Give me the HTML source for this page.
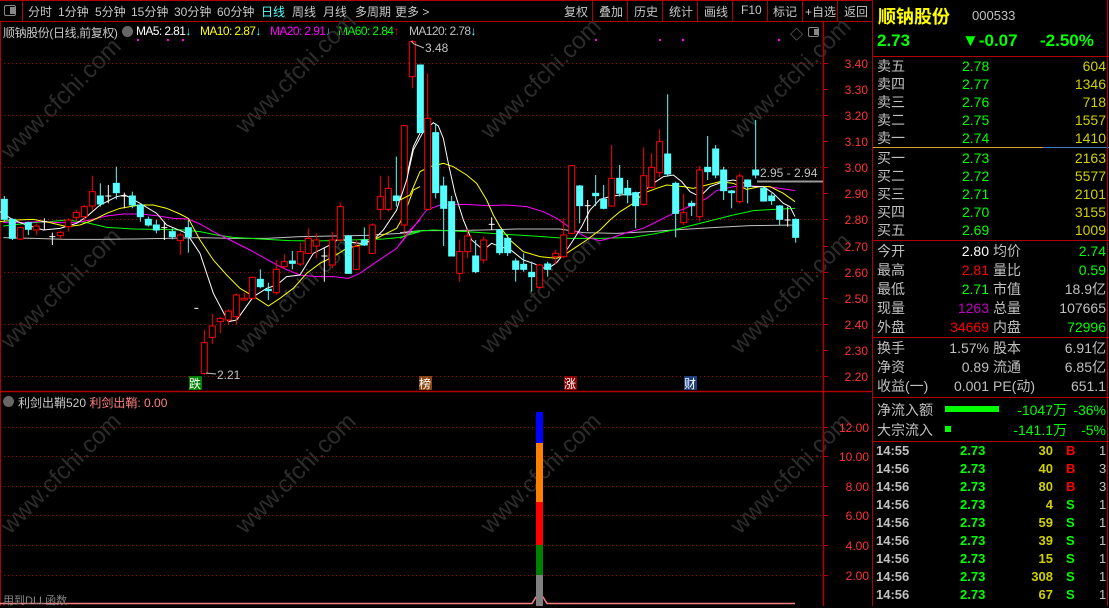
<!DOCTYPE html>
<html><head><meta charset="utf-8"><style>
*{margin:0;padding:0;box-sizing:border-box}
body{width:1109px;height:606px;background:#000;overflow:hidden;position:relative;font-family:"Liberation Sans","Noto Sans CJK SC",sans-serif;color:#c0c0c0}
.a{position:absolute;white-space:nowrap}
.tb{font-size:12px;color:#c8c8c8;top:3px}
.rp{font-size:14px}
.r{text-align:right}
.ma{font-size:12px;letter-spacing:-0.6px;top:24px}
</style></head><body>
<!-- top toolbar -->
<div class="a" style="left:0;top:0;width:873px;height:22px;border:1px solid #b00000;border-left:0"></div>
<div class="a" style="left:22px;top:1px;width:1px;height:20px;background:#b00000"></div>
<div class="a" style="left:4px;top:5px;width:12px;height:11px;border:1px solid #888;border-radius:2px"></div>
<div class="a" style="left:10px;top:7px;width:5px;height:7px;background:#888"></div>
<div class="a tb" style="left:28px">分时</div>
<div class="a tb" style="left:58px">1分钟</div>
<div class="a tb" style="left:95px">5分钟</div>
<div class="a tb" style="left:131px">15分钟</div>
<div class="a tb" style="left:174px">30分钟</div>
<div class="a tb" style="left:217px">60分钟</div>
<div class="a tb" style="left:261px;color:#55ffff">日线</div>
<div class="a tb" style="left:292px">周线</div>
<div class="a tb" style="left:323px">月线</div>
<div class="a tb" style="left:355px">多周期</div>
<div class="a tb" style="left:395px">更多 &gt;</div>
<div class="a tb" style="left:564px">复权</div>
<div class="a tb" style="left:599px">叠加</div>
<div class="a tb" style="left:634px">历史</div>
<div class="a tb" style="left:669px">统计</div>
<div class="a tb" style="left:704px">画线</div>
<div class="a tb" style="left:741px">F10</div>
<div class="a tb" style="left:773px">标记</div>
<div class="a tb" style="left:805px">+自选</div>
<div class="a tb" style="left:844px">返回</div>
<div class="a" style="left:592px;top:1px;width:1px;height:20px;background:#b00000"></div>
<div class="a" style="left:627px;top:1px;width:1px;height:20px;background:#b00000"></div>
<div class="a" style="left:662px;top:1px;width:1px;height:20px;background:#b00000"></div>
<div class="a" style="left:697px;top:1px;width:1px;height:20px;background:#b00000"></div>
<div class="a" style="left:732px;top:1px;width:1px;height:20px;background:#b00000"></div>
<div class="a" style="left:767px;top:1px;width:1px;height:20px;background:#b00000"></div>
<div class="a" style="left:802px;top:1px;width:1px;height:20px;background:#b00000"></div>
<div class="a" style="left:837px;top:1px;width:1px;height:20px;background:#b00000"></div>

<!-- MA legend -->
<div class="a" style="left:3px;top:24px;font-size:12px;color:#c8c8c8;letter-spacing:-0.4px">顺钠股份(日线,前复权)</div>
<div class="a" style="left:122px;top:26px;width:11px;height:11px;border-radius:50%;background:#666"></div>
<div class="a ma" style="left:136px;color:#fff">MA5: 2.81<span style="color:#55ffff">↓</span></div>
<div class="a ma" style="left:200px;color:#ffff00">MA10: 2.87<span style="color:#55ffff">↓</span></div>
<div class="a ma" style="left:270px;color:#ff00ff">MA20: 2.91<span style="color:#55ffff">↓</span></div>
<div class="a ma" style="left:338px;color:#00ff00">MA60: 2.84<span style="color:#ff0000">↑</span></div>
<div class="a ma" style="left:409px;color:#c0c0c0">MA120: 2.78<span style="color:#55ffff">↓</span></div>
<div class="a" style="left:790px;top:24px;font-size:13px;color:#888">◇</div>
<div class="a" style="left:808px;top:27px;width:11px;height:10px;border:1px solid #888;border-radius:2px"></div>
<div class="a" style="left:814px;top:29px;width:4px;height:6px;background:#888"></div>

<svg class="a" style="left:0;top:0" width="873" height="606" viewBox="0 0 873 606">
<!-- watermarks -->
<g fill="#2c2c2c" font-family="Liberation Sans" font-size="24">
<text transform="translate(10,160) rotate(-45)">www.cfchi.com</text>
<text transform="translate(245,135) rotate(-45)">www.cfchi.com</text>
<text transform="translate(490,140) rotate(-45)">www.cfchi.com</text>
<text transform="translate(740,140) rotate(-45)">www.cfchi.com</text>
<text transform="translate(10,350) rotate(-45)">www.cfchi.com</text>
<text transform="translate(245,355) rotate(-45)">www.cfchi.com</text>
<text transform="translate(490,355) rotate(-45)">www.cfchi.com</text>
<text transform="translate(740,355) rotate(-45)">www.cfchi.com</text>
<text transform="translate(10,535) rotate(-45)">www.cfchi.com</text>
<text transform="translate(245,535) rotate(-45)">www.cfchi.com</text>
<text transform="translate(490,535) rotate(-45)">www.cfchi.com</text>
<text transform="translate(740,535) rotate(-45)">www.cfchi.com</text>
</g>
<!-- grid -->
<g stroke="#b00000" stroke-dasharray="1,3" stroke-width="1">
<line x1="0" x2="822" y1="63.5" y2="63.5"/><line x1="0" x2="822" y1="115.5" y2="115.5"/>
<line x1="0" x2="822" y1="167.5" y2="167.5"/><line x1="0" x2="822" y1="219.5" y2="219.5"/>
<line x1="0" x2="822" y1="272.5" y2="272.5"/><line x1="0" x2="822" y1="324.5" y2="324.5"/>
<line x1="0" x2="822" y1="376.5" y2="376.5"/>
<line x1="0" x2="822" y1="427.5" y2="427.5"/><line x1="0" x2="822" y1="456.5" y2="456.5"/>
<line x1="0" x2="822" y1="486.5" y2="486.5"/><line x1="0" x2="822" y1="515.5" y2="515.5"/>
<line x1="0" x2="822" y1="545.5" y2="545.5"/><line x1="0" x2="822" y1="575.5" y2="575.5"/>
</g>
<line x1="0.5" y1="22" x2="0.5" y2="606" stroke="#b00000"/>
<line x1="823.5" y1="22" x2="823.5" y2="606" stroke="#b00000" stroke-width="1.5"/>
<line x1="0" y1="391.5" x2="873" y2="391.5" stroke="#b00000" stroke-width="1.5"/>
<line x1="872.5" y1="0" x2="872.5" y2="606" stroke="#b00000"/>
<!-- axis ticks -->
<g stroke="#b00000">
<line x1="823" x2="828" y1="63.5" y2="63.5"/><line x1="823" x2="828" y1="89.5" y2="89.5"/><line x1="823" x2="828" y1="115.5" y2="115.5"/><line x1="823" x2="828" y1="141.5" y2="141.5"/><line x1="823" x2="828" y1="167.5" y2="167.5"/><line x1="823" x2="828" y1="193.5" y2="193.5"/><line x1="823" x2="828" y1="219.5" y2="219.5"/><line x1="823" x2="828" y1="246.5" y2="246.5"/><line x1="823" x2="828" y1="272.5" y2="272.5"/><line x1="823" x2="828" y1="298.5" y2="298.5"/><line x1="823" x2="828" y1="324.5" y2="324.5"/><line x1="823" x2="828" y1="350.5" y2="350.5"/><line x1="823" x2="828" y1="376.5" y2="376.5"/>
<line x1="823" x2="828" y1="427.5" y2="427.5"/><line x1="823" x2="828" y1="456.5" y2="456.5"/><line x1="823" x2="828" y1="486.5" y2="486.5"/><line x1="823" x2="828" y1="515.5" y2="515.5"/><line x1="823" x2="828" y1="545.5" y2="545.5"/><line x1="823" x2="828" y1="575.5" y2="575.5"/>
</g>
<g fill="#ff3333" font-family="Liberation Sans" font-size="12" text-anchor="end">
<text x="868" y="68">3.40</text><text x="868" y="94">3.30</text><text x="868" y="120">3.20</text><text x="868" y="146">3.10</text><text x="868" y="172">3.00</text><text x="868" y="198">2.90</text><text x="868" y="224">2.80</text><text x="868" y="251">2.70</text><text x="868" y="277">2.60</text><text x="868" y="303">2.50</text><text x="868" y="329">2.40</text><text x="868" y="355">2.30</text><text x="868" y="381">2.20</text>
<text x="869" y="432">12.00</text><text x="869" y="461">10.00</text><text x="869" y="491">8.00</text><text x="869" y="520">6.00</text><text x="869" y="550">4.00</text><text x="869" y="580">2.00</text>
</g>
<!-- magenta dots -->
<g fill="#ff00ff"><rect x="137" y="39" width="2" height="2"/><rect x="167" y="39" width="2" height="2"/><rect x="182" y="39" width="2" height="2"/><rect x="595" y="39" width="2" height="2"/><rect x="659" y="39" width="2" height="2"/><rect x="682" y="39" width="2" height="2"/><rect x="778" y="39" width="2" height="2"/></g>

<!-- LEFT candles (zoom coords) -->
<g transform="translate(0,40) scale(0.33333)" stroke-width="3">
<g fill="none" stroke-width="3">
<polyline stroke="#c0c0c0" points="10,593 100,595 200,598 300,598 400,597 500,595 600,593 700,595 800,595 900,590 1000,588 1100,586 1200,580 1260,575"/>
<polyline stroke="#00ff00" points="10,558 100,548 150,545 200,540 260,548 320,562 400,567 470,568 550,570 600,575 650,585 700,592 800,598 870,602 950,603 1050,600 1150,597 1200,592 1260,575"/>
<polyline stroke="#ff00ff" points="10,548 60,548 120,545 180,548 230,548 270,540 320,528 370,522 420,522 470,527 520,535 565,537 600,552 640,575 690,600 750,630 800,658 850,685 900,705 950,710 1000,710 1045,715 1080,700 1130,665 1190,625 1230,570 1260,540"/>
<polyline stroke="#ffff00" points="0,545 50,540 100,538 150,548 200,560 240,555 280,540 320,520 360,505 420,495 460,495 500,505 540,522 565,535 600,600 640,660 680,705 720,745 770,775 805,798 840,775 880,745 920,700 960,670 1000,650 1040,625 1080,615 1120,600 1160,580 1190,565 1210,530 1240,450 1260,440"/>
<polyline stroke="#ffffff" points="0,515 40,540 80,555 130,570 180,565 230,550 260,530 300,495 350,470 375,465 420,490 470,520 500,555 560,580 600,640 640,760 685,845 710,840 760,770 800,745 830,735 860,710 900,705 940,640 970,625 1000,610 1020,590 1040,605 1080,610 1120,600 1150,570 1190,510 1220,410 1240,320 1260,280"/>
</g>
<g stroke="#55ffff" fill="#55ffff">
<line x1="13" x2="13" y1="468" y2="545"/><rect x="4" y="478" width="18" height="60"/>
<line x1="37" x2="37" y1="535" y2="600"/><rect x="28" y="538" width="18" height="57"/>
<line x1="85" x2="85" y1="545" y2="585"/><rect x="76" y="548" width="18" height="20"/>
<line x1="301" x2="301" y1="430" y2="500"/><rect x="292" y="468" width="18" height="24"/>
<line x1="349" x2="349" y1="380" y2="478"/><rect x="340" y="430" width="18" height="28"/>
<line x1="397" x2="397" y1="455" y2="505"/><rect x="388" y="468" width="18" height="27"/>
<line x1="421" x2="421" y1="490" y2="545"/><rect x="412" y="495" width="18" height="35"/>
<line x1="445" x2="445" y1="530" y2="560"/><rect x="436" y="538" width="18" height="17"/>
<line x1="469" x2="469" y1="540" y2="580"/><rect x="460" y="555" width="18" height="15"/>
<line x1="517" x2="517" y1="565" y2="598"/><rect x="508" y="575" width="18" height="15"/>
<line x1="565" x2="565" y1="540" y2="638"/><rect x="556" y="563" width="18" height="27"/>
<line x1="781" x2="781" y1="688" y2="745"/><rect x="772" y="718" width="18" height="22"/>
<line x1="805" x2="805" y1="728" y2="780"/><rect x="796" y="748" width="18" height="4"/>
<line x1="877" x2="877" y1="633" y2="688"/><rect x="868" y="663" width="18" height="7"/>
<line x1="1045" x2="1045" y1="585" y2="702"/><rect x="1036" y="588" width="18" height="112"/>
<line x1="1093" x2="1093" y1="562" y2="618"/><rect x="1084" y="600" width="18" height="15"/>
<line x1="1189" x2="1189" y1="350" y2="500"/><rect x="1180" y="468" width="18" height="14"/>
</g>
<g stroke="#ff0000" fill="#000">
<line x1="61" x2="61" y1="560" y2="600"/><rect x="52" y="563" width="18" height="34"/>
<line x1="109" x2="109" y1="550" y2="585"/><rect x="100" y="558" width="18" height="12"/>
<line x1="181" x2="181" y1="572" y2="597"/><rect x="172" y="577" width="18" height="10"/>
<line x1="205" x2="205" y1="535" y2="575"/><rect x="196" y="540" width="18" height="20"/>
<line x1="229" x2="229" y1="510" y2="545"/><rect x="220" y="517" width="18" height="15"/>
<line x1="253" x2="253" y1="495" y2="545"/><rect x="244" y="500" width="18" height="30"/>
<line x1="277" x2="277" y1="407" y2="510"/><rect x="268" y="455" width="18" height="43"/>
<line x1="541" x2="541" y1="578" y2="645"/><rect x="532" y="585" width="18" height="17"/>
<line x1="613" x2="613" y1="870" y2="1005"/><rect x="604" y="908" width="18" height="92"/>
<line x1="637" x2="637" y1="822" y2="912"/><rect x="628" y="858" width="18" height="34"/>
<line x1="661" x2="661" y1="830" y2="880"/><rect x="652" y="835" width="18" height="10"/>
<line x1="685" x2="685" y1="808" y2="855"/><rect x="676" y="813" width="18" height="27"/>
<line x1="709" x2="709" y1="760" y2="855"/><rect x="700" y="765" width="18" height="65"/>
<line x1="733" x2="733" y1="758" y2="782"/><rect x="724" y="775" width="18" height="5"/>
<line x1="757" x2="757" y1="710" y2="778"/><rect x="748" y="712" width="18" height="63"/>
<line x1="829" x2="829" y1="660" y2="765"/><rect x="820" y="688" width="18" height="70"/>
<line x1="853" x2="853" y1="643" y2="685"/><rect x="844" y="665" width="18" height="15"/>
<line x1="901" x2="901" y1="608" y2="678"/><rect x="892" y="635" width="18" height="37"/>
<line x1="925" x2="925" y1="565" y2="642"/><rect x="916" y="595" width="18" height="45"/>
<line x1="949" x2="949" y1="580" y2="655"/><rect x="940" y="600" width="18" height="18"/>
<line x1="997" x2="997" y1="575" y2="685"/><rect x="988" y="600" width="18" height="75"/>
<line x1="1021" x2="1021" y1="487" y2="605"/><rect x="1012" y="500" width="18" height="100"/>
<line x1="1069" x2="1069" y1="598" y2="690"/><rect x="1060" y="620" width="18" height="68"/>
<line x1="1117" x2="1117" y1="550" y2="642"/><rect x="1108" y="555" width="18" height="85"/>
<line x1="1141" x2="1141" y1="407" y2="538"/><rect x="1132" y="470" width="18" height="38"/>
<line x1="1165" x2="1165" y1="407" y2="515"/><rect x="1156" y="445" width="18" height="63"/>
<line x1="1213" x2="1213" y1="255" y2="592"/><rect x="1204" y="257" width="18" height="298"/>
<line x1="1237" x2="1237" y1="0" y2="145"/><rect x="1228" y="5" width="18" height="105"/>
</g>
<g stroke="#fff">
<line x1="133" x2="133" y1="535" y2="570"/><line x1="124" x2="142" y1="545" y2="545"/>
<line x1="157" x2="157" y1="578" y2="615"/><line x1="148" x2="166" y1="590" y2="590"/>
<line x1="325" x2="325" y1="435" y2="490"/><line x1="316" x2="334" y1="468" y2="468"/>
<line x1="373" x2="373" y1="458" y2="505"/><line x1="364" x2="382" y1="468" y2="468"/>
<line x1="493" x2="493" y1="545" y2="600"/><line x1="484" x2="502" y1="563" y2="563"/>
<line x1="583" x2="595" y1="805" y2="805"/>
<line x1="973" x2="973" y1="625" y2="725"/><line x1="964" x2="982" y1="648" y2="648"/>
</g>
</g>

<!-- RIGHT candles -->
<g transform="translate(400,40) scale(0.33333)" stroke-width="3">
<g fill="none" stroke-width="3">
<polyline stroke="#c0c0c0" points="0,578 60,572 150,572 250,570 350,567 480,567 550,578 650,580 750,575 850,568 950,562 1050,557 1185,555"/>
<polyline stroke="#00ff00" points="0,595 40,575 100,570 200,575 300,582 400,588 500,595 600,595 700,592 760,582 820,570 900,550 1000,525 1060,512 1120,508 1185,505"/>
<polyline stroke="#ff00ff" points="0,612 30,575 80,510 120,495 200,493 260,497 320,495 380,500 430,515 470,535 520,570 560,592 600,602 630,595 680,578 730,565 780,540 830,515 880,495 920,475 950,452 1000,440 1050,438 1100,440 1140,445 1185,452"/>
<polyline stroke="#ffff00" points="0,480 30,465 60,395 90,380 130,370 160,380 200,405 230,430 260,480 280,525 300,560 330,600 370,635 420,650 470,655 500,640 530,620 560,600 600,570 630,540 660,515 700,490 730,460 770,445 800,435 850,440 880,445 920,435 960,425 1000,430 1040,448 1080,440 1110,440 1150,460 1185,485"/>
<polyline stroke="#ffffff" points="0,480 20,420 40,330 70,275 100,248 115,258 130,295 145,370 165,460 190,540 215,600 250,630 275,610 300,620 330,628 370,660 400,670 440,688 470,668 500,630 520,600 545,560 570,510 600,478 630,470 660,465 700,462 730,455 760,430 790,410 820,405 845,425 870,455 900,470 930,440 970,425 1000,420 1030,428 1060,440 1090,440 1120,460 1150,490 1170,500 1185,530"/>
</g>
<g stroke="#55ffff" fill="#55ffff">
<rect x="52" y="75" width="18" height="203"/>
<line x1="107" x2="107" y1="250" y2="475"/><rect x="98" y="278" width="18" height="180"/>
<line x1="131" x2="131" y1="410" y2="618"/><rect x="122" y="438" width="18" height="67"/>
<line x1="155" x2="155" y1="468" y2="648"/><rect x="146" y="485" width="18" height="163"/>
<line x1="227" x2="227" y1="600" y2="700"/><rect x="218" y="648" width="18" height="47"/>
<line x1="299" x2="299" y1="568" y2="645"/><rect x="290" y="570" width="18" height="68"/>
<line x1="323" x2="323" y1="585" y2="648"/><rect x="314" y="595" width="18" height="43"/>
<line x1="347" x2="347" y1="655" y2="725"/><rect x="338" y="663" width="18" height="25"/>
<line x1="371" x2="371" y1="640" y2="695"/><rect x="362" y="673" width="18" height="15"/>
<line x1="395" x2="395" y1="665" y2="755"/><rect x="386" y="697" width="18" height="13"/>
<line x1="443" x2="443" y1="665" y2="710"/><rect x="434" y="672" width="18" height="16"/>
<line x1="539" x2="539" y1="435" y2="550"/><rect x="530" y="438" width="18" height="59"/>
<line x1="587" x2="587" y1="405" y2="498"/><rect x="578" y="460" width="18" height="7"/>
<line x1="611" x2="611" y1="435" y2="508"/><rect x="602" y="478" width="18" height="27"/>
<line x1="659" x2="659" y1="375" y2="470"/><rect x="650" y="415" width="18" height="45"/>
<line x1="683" x2="683" y1="420" y2="490"/><rect x="674" y="445" width="18" height="20"/>
<line x1="707" x2="707" y1="455" y2="565"/><rect x="698" y="458" width="18" height="39"/>
<line x1="803" x2="803" y1="163" y2="410"/><rect x="794" y="342" width="18" height="60"/>
<line x1="827" x2="827" y1="425" y2="592"/><rect x="818" y="430" width="18" height="90"/>
<line x1="875" x2="875" y1="482" y2="528"/><rect x="866" y="490" width="18" height="7"/>
<line x1="923" x2="923" y1="288" y2="420"/><rect x="914" y="382" width="18" height="13"/>
<line x1="947" x2="947" y1="315" y2="415"/><rect x="938" y="327" width="18" height="78"/>
<line x1="971" x2="971" y1="380" y2="480"/><rect x="962" y="390" width="18" height="62"/>
<line x1="995" x2="995" y1="450" y2="505"/><rect x="986" y="453" width="18" height="5"/>
<line x1="1043" x2="1043" y1="418" y2="490"/><rect x="1034" y="420" width="18" height="20"/>
<line x1="1067" x2="1067" y1="240" y2="415"/><rect x="1058" y="390" width="18" height="15"/>
<line x1="1091" x2="1091" y1="440" y2="485"/><rect x="1082" y="445" width="18" height="38"/>
<line x1="1115" x2="1115" y1="460" y2="495"/><rect x="1106" y="468" width="18" height="14"/>
<line x1="1139" x2="1139" y1="495" y2="555"/><rect x="1130" y="498" width="18" height="40"/>
<line x1="1187" x2="1187" y1="535" y2="608"/><rect x="1178" y="538" width="18" height="54"/>
</g>
<g stroke="#ff0000" fill="#000">
<line x1="83" x2="83" y1="100" y2="510"/><rect x="74" y="235" width="18" height="273"/>
<line x1="179" x2="179" y1="598" y2="725"/><rect x="170" y="635" width="18" height="65"/>
<line x1="203" x2="203" y1="568" y2="655"/><rect x="194" y="588" width="18" height="47"/>
<line x1="251" x2="251" y1="590" y2="670"/><rect x="242" y="600" width="18" height="60"/>
<line x1="419" x2="419" y1="672" y2="745"/><rect x="410" y="675" width="18" height="67"/>
<line x1="467" x2="467" y1="630" y2="672"/><rect x="458" y="640" width="18" height="10"/>
<line x1="491" x2="491" y1="535" y2="655"/><rect x="482" y="585" width="18" height="65"/>
<line x1="515" x2="515" y1="375" y2="582"/><rect x="506" y="377" width="18" height="203"/>
<line x1="635" x2="635" y1="315" y2="500"/><rect x="626" y="415" width="18" height="83"/>
<line x1="731" x2="731" y1="322" y2="497"/><rect x="722" y="407" width="18" height="86"/>
<line x1="755" x2="755" y1="340" y2="445"/><rect x="746" y="382" width="18" height="60"/>
<line x1="779" x2="779" y1="268" y2="412"/><rect x="770" y="305" width="18" height="93"/>
<line x1="851" x2="851" y1="462" y2="555"/><rect x="842" y="518" width="18" height="30"/>
<line x1="899" x2="899" y1="378" y2="545"/><rect x="890" y="390" width="18" height="140"/>
<line x1="1019" x2="1019" y1="400" y2="490"/><rect x="1010" y="408" width="18" height="77"/>
</g>
<g stroke="#fff">
<line x1="275" x2="275" y1="532" y2="570"/><line x1="266" x2="284" y1="553" y2="553"/>
<line x1="563" x2="563" y1="480" y2="573"/><line x1="554" x2="572" y1="497" y2="497"/>
<line x1="1163" x2="1163" y1="500" y2="560"/><line x1="1154" x2="1172" y1="540" y2="540"/>
</g>
</g>
<!-- annotations -->
<line x1="757" y1="181.5" x2="823" y2="181.5" stroke="#999" stroke-width="2"/>
<g fill="#c0c0c0" font-family="Liberation Sans" font-size="12">
<text x="760" y="177">2.95 - 2.94</text>
<text x="425" y="52">3.48</text>
<text x="217" y="379">2.21</text>
</g>
<polyline points="424,48 414,44 411,41" stroke="#c0c0c0" fill="none"/>
<polyline points="216,374 206,373" stroke="#c0c0c0" fill="none"/>
<rect x="189" y="376" width="13" height="14" fill="#008000"/>
<rect x="419" y="376" width="13" height="14" fill="#8b4513"/>
<rect x="564" y="376" width="13" height="14" fill="#8b0000"/>
<rect x="684" y="376" width="13" height="14" fill="#1f3f7f"/>
<g fill="#fff" font-family="Liberation Sans,Noto Sans CJK SC,sans-serif" font-size="12">
<text x="189" y="388">跌</text><text x="419" y="388">榜</text><text x="564" y="388">涨</text><text x="684" y="388">财</text>
</g>
<!-- lower panel -->
<polyline points="0,603.5 532,603.5 536,597 543,597 547,603.5 795,603.5" stroke="#ff8080" stroke-width="1.5" fill="none"/>
<rect x="536" y="412" width="7" height="31" fill="#0000ff"/>
<rect x="536" y="443" width="7" height="59" fill="#ff8000"/>
<rect x="536" y="502" width="7" height="43" fill="#ff0000"/>
<rect x="536" y="545" width="7" height="30" fill="#008000"/>
<rect x="536" y="575" width="7" height="31" fill="#808080"/>
</svg>

<div class="a" style="left:3px;top:396px;width:11px;height:11px;border-radius:50%;background:#666"></div>
<div class="a" style="left:18px;top:394px;font-size:12px;color:#c8c8c8">利剑出鞘520 <span style="color:#ff8080">利剑出鞘: 0.00</span></div>
<div class="a" style="left:3px;top:592px;font-size:11px;color:#888">用到DLL函数</div>

<!-- right panel -->
<div class="a" style="left:878px;top:3px;font-size:18px;font-weight:bold;color:#ffff00">顺钠股份</div>
<div class="a" style="left:972px;top:8px;font-size:13px;color:#c0c0c0">000533</div>
<div class="a" style="left:877px;top:31px;font-size:17px;font-weight:bold;color:#00ff00">2.73</div>
<div class="a" style="left:962px;top:31px;font-size:17px;font-weight:bold;color:#00ff00">▼-0.07</div>
<div class="a" style="left:1040px;top:31px;font-size:17px;font-weight:bold;color:#00ff00">-2.50%</div>
<div class="a" style="left:873px;top:56px;width:236px;height:1px;background:#b00000"></div>
<div class="a" style="left:873px;top:147px;width:170px;height:1px;background:#d8a030"></div>
<div class="a" style="left:1043px;top:147px;width:66px;height:1px;background:#4080c0"></div>
<div class="a" style="left:873px;top:240px;width:236px;height:1px;background:#b00000"></div>
<div class="a" style="left:873px;top:337px;width:236px;height:1px;background:#b00000"></div>
<div class="a" style="left:873px;top:397px;width:236px;height:1px;background:#b00000"></div>
<div class="a" style="left:873px;top:441px;width:236px;height:1px;background:#b00000"></div>
<div class="a" style="left:1107px;top:0;width:1px;height:606px;background:#b00000"></div>

<div class="a rp" style="left:877px;top:57px;line-height:18px;color:#c0c0c0">卖五<br>卖四<br>卖三<br>卖二<br>卖一</div>
<div class="a rp" style="left:962px;top:57px;line-height:18px;color:#00ff00">2.78<br>2.77<br>2.76<br>2.75<br>2.74</div>
<div class="a rp r" style="right:3px;top:57px;line-height:18px;color:#d0d000">604<br>1346<br>718<br>1557<br>1410</div>
<div class="a rp" style="left:877px;top:149px;line-height:18px;color:#c0c0c0">买一<br>买二<br>买三<br>买四<br>买五</div>
<div class="a rp" style="left:962px;top:149px;line-height:18px;color:#00ff00">2.73<br>2.72<br>2.71<br>2.70<br>2.69</div>
<div class="a rp r" style="right:3px;top:149px;line-height:18px;color:#d0d000">2163<br>5577<br>2101<br>3155<br>1009</div>

<div class="a rp" style="left:877px;top:242px;line-height:19px">今开<br>最高<br>最低<br>现量<br>外盘</div>
<div class="a rp r" style="right:120px;top:242px;line-height:19px"><span style="color:#fff">2.80</span><br><span style="color:#ff0000">2.81</span><br><span style="color:#00ff00">2.71</span><br><span style="color:#c000c0">1263</span><br><span style="color:#ff0000">34669</span></div>
<div class="a rp" style="left:993px;top:242px;line-height:19px">均价<br>量比<br>市值<br>总量<br>内盘</div>
<div class="a rp r" style="right:3px;top:242px;line-height:19px"><span style="color:#00ff00">2.74</span><br><span style="color:#00ff00">0.59</span><br>18.9亿<br>107665<br><span style="color:#00ff00">72996</span></div>
<div class="a rp" style="left:877px;top:339px;line-height:19px">换手<br>净资<br>收益(一)</div>
<div class="a rp r" style="right:120px;top:339px;line-height:19px">1.57%<br>0.89<br>0.001</div>
<div class="a rp" style="left:993px;top:339px;line-height:19px">股本<br>流通<br>PE(动)</div>
<div class="a rp r" style="right:3px;top:339px;line-height:19px">6.91亿<br>6.85亿<br>651.1</div>

<div class="a rp" style="left:877px;top:400px;line-height:20px">净流入额<br>大宗流入</div>
<div class="a" style="left:945px;top:406px;width:54px;height:6px;background:#00ff00"></div>
<div class="a" style="left:945px;top:426px;width:6px;height:6px;background:#00ff00"></div>
<div class="a rp r" style="right:42px;top:400px;line-height:20px;color:#00ff00">-1047万<br>-141.1万</div>
<div class="a rp r" style="right:3px;top:400px;line-height:20px;color:#00ff00">-36%<br>-5%</div>

<div class="a" style="left:876px;top:442px;font-size:13px;font-weight:bold;line-height:18px;color:#c0c0c0">14:55<br>14:56<br>14:56<br>14:56<br>14:56<br>14:56<br>14:56<br>14:56<br>14:56</div>
<div class="a" style="left:960px;top:442px;font-size:13px;font-weight:bold;line-height:18px;color:#00ff00">2.73<br>2.73<br>2.73<br>2.73<br>2.73<br>2.73<br>2.73<br>2.73<br>2.73</div>
<div class="a r" style="right:56px;top:442px;font-size:13px;font-weight:bold;line-height:18px;color:#d0d000">30<br>40<br>80<br>4<br>59<br>39<br>15<br>308<br>67</div>
<div class="a" style="left:1066px;top:442px;font-size:13px;font-weight:bold;line-height:18px"><span style="color:#ff0000">B<br>B<br>B</span><br><span style="color:#00ff00">S<br>S<br>S<br>S<br>S<br>S</span></div>
<div class="a" style="left:1099px;top:442px;font-size:13px;line-height:18px;color:#c0c0c0">1<br>3<br>3<br>1<br>1<br>1<br>1<br>1<br>1</div>
</body></html>
